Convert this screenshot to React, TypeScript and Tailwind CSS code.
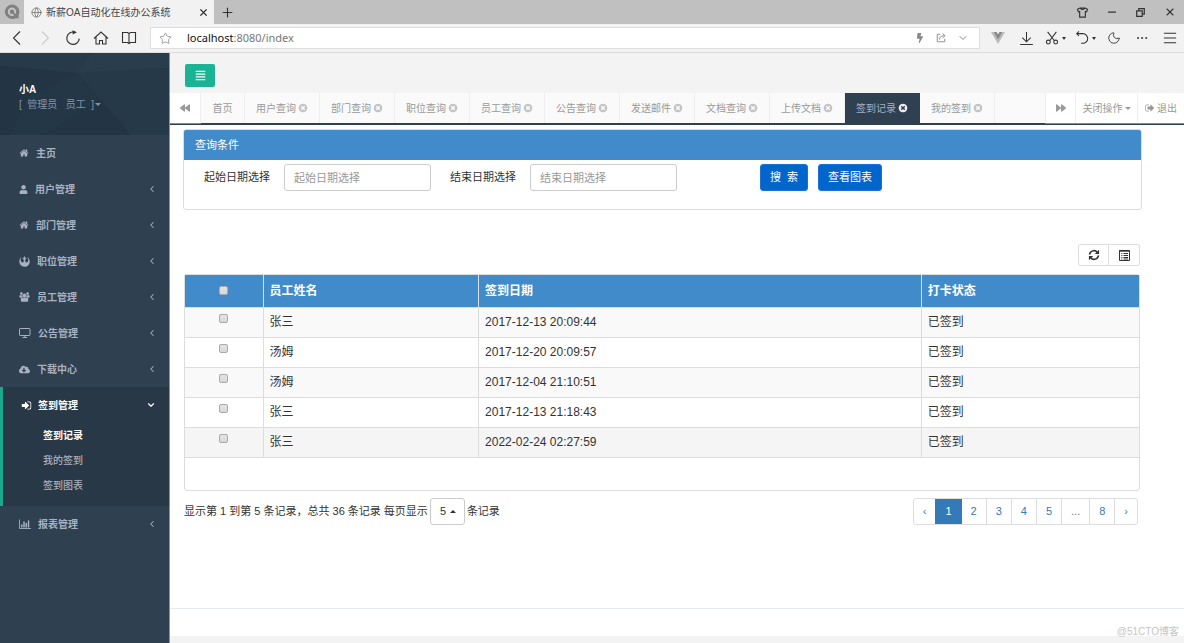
import React, { useState } from "react";
import { FaUser, FaRebel, FaCloudDownloadAlt, FaBackward, FaForward, FaAlignJustify, FaBolt } from "react-icons/fa";
import { ChevronLeft, ChevronDown, Star, Globe, Plus, X, Minus, Moon, Ellipsis } from "lucide-react";

type IconProps = { className?: string };

function Glyph({ d, className, wide = false }: IconProps & { d: string; wide?: boolean }) {
  return (
    <svg viewBox={wide ? "0 0 2048 1792" : "0 0 1792 1792"} className={className} fill="currentColor" aria-hidden="true">
      <path d={d} />
    </svg>
  );
}

const HOME = "M1472 992v480q0 26-19 45t-45 19h-384v-384h-256v384h-384q-26 0-45-19t-19-45v-480q0-1 .5-3t.5-3l575-474 575 474q1 2 1 6zm223-69l-62 74q-8 9-21 11h-3q-13 0-21-7l-692-577-692 577q-12 8-24 7-13-2-21-11l-62-74q-8-10-7-23.5t11-21.5l719-599q32-26 76-26t76 26l244 204v-195q0-14 9-23t23-9h192q14 0 23 9t9 23v408l219 182q10 8 11 21.5t-7 23.5z";
const CLOSE_CIRCLE = "M1277 1122q0-26-19-45l-181-181 181-181q19-19 19-45 0-27-19-46l-90-90q-19-19-46-19-26 0-45 19l-181 181-181-181q-19-19-45-19-27 0-46 19l-90 90q-19 19-19 46 0 26 19 45l181 181-181 181q-19 19-19 45 0 27 19 46l90 90q19 19 46 19 26 0 45-19l181-181 181 181q19 19 45 19 27 0 46-19l90-90q19-19 19-46zm387-226q0 209-103 385.5t-279.5 279.5-385.5 103-385.5-103-279.5-279.5-103-385.5 103-385.5 279.5-279.5 385.5-103 385.5 103 279.5 279.5 103 385.5z";
const SIGN_IN = "M1312 896q0 26-19 45l-544 544q-19 19-45 19t-45-19-19-45v-288h-448q-26 0-45-19t-19-45v-384q0-26 19-45t45-19h448v-288q0-26 19-45t45-19 45 19l544 544q19 19 19 45zm352-352v704q0 119-84.5 203.5t-203.5 84.5h-320q-13 0-22.5-9.5t-9.5-22.5q0-4-1-20t-.5-26.5 3-23.5 10-19.5 20.5-6.5h320q66 0 113-47t47-113v-704q0-66-47-113t-113-47h-312l-11.5-1-11.5-3-8-5.5-7-9-2-13.5q0-4-1-20t-.5-26.5 3-23.5 10-19.5 20.5-6.5h320q119 0 203.5 84.5t84.5 203.5z";
const SIGN_OUT = "M704 1440q0 4 1 20t.5 26.5-3 23.5-10 19.5-20.5 6.5h-320q-119 0-203.5-84.5t-84.5-203.5v-704q0-119 84.5-203.5t203.5-84.5h320q13 0 22.5 9.5t9.5 22.5q0 4 1 20t.5 26.5-3 23.5-10 19.5-20.5 6.5h-320q-66 0-113 47t-47 113v704q0 66 47 113t113 47h312l11.5 1 11.5 3 8 5.5 7 9 2 13.5zm928-544q0 26-19 45l-544 544q-19 19-45 19t-45-19-19-45v-288h-448q-26 0-45-19t-19-45v-384q0-26 19-45t45-19h448v-288q0-26 19-45t45-19 45 19l544 544q19 19 19 45z";
const GROUP = "M657 896q-162 5-265 128h-134q-82 0-138-40.5t-56-118.5q0-353 124-353 6 0 43.5 21t97.5 42.5 119 21.5q67 0 133-23-5 37-5 66 0 139 81 256zm1071 637q0 120-73 189.5t-194 69.5h-874q-121 0-194-69.5t-73-189.5q0-53 3.5-103.5t14-109 26.5-108.5 43-97.5 62-81 85.5-53.5 111.5-20q10 0 43 21.5t73 48 107 48 135 21.5 135-21.5 107-48 73-48 43-21.5q61 0 111.5 20t85.5 53.5 62 81 43 97.5 26.5 108.5 14 109 3.5 103.5zm-1024-1277q0 106-75 181t-181 75-181-75-75-181 75-181 181-75 181 75 75 181zm704 384q0 159-112.5 271.5t-271.5 112.5-271.5-112.5-112.5-271.5 112.5-271.5 271.5-112.5 271.5 112.5 112.5 271.5zm576 225q0 78-56 118.5t-138 40.5h-134q-103-123-265-128 81-117 81-256 0-29-5-66 66 23 133 23 59 0 119-21.5t97.5-42.5 43.5-21q124 0 124 353zm-128-609q0 106-75 181t-181 75-181-75-75-181 75-181 181-75 181 75 75 181z";

function Desktop() {
  return (
    <svg viewBox="0 0 12 12" className="size-3" fill="none" stroke="currentColor" aria-hidden="true">
      <rect x="0.5" y="1.5" width="10.5" height="7" rx="0.6" />
      <path d="M3.5 10.5h4.5M5.8 8.5v2" />
    </svg>
  );
}

function BarChart() {
  return (
    <svg viewBox="0 0 12 12" className="size-3" fill="none" stroke="currentColor" aria-hidden="true">
      <path d="M0.5 1.5v9h11.5" strokeWidth="0.9" />
      <path d="M2.8 9.6V6.5M5 9.6V3.5M7.2 9.6V5M9.5 9.6V2.5" strokeWidth="1.5" />
    </svg>
  );
}

function Caret({ up = false }: { up?: boolean }) {
  return (
    <svg viewBox="0 0 6 3" className="h-[3px] w-[6px]" fill="currentColor" aria-hidden="true">
      <path d={up ? "M0 3h6L3 0z" : "M0 0h6L3 3z"} />
    </svg>
  );
}

function Line({ d, children, className = "size-4" }: IconProps & { d: string; children?: React.ReactNode }) {
  return (
    <svg viewBox="0 0 16 16" className={className} fill="none" stroke="currentColor" strokeWidth="1.1" aria-hidden="true">
      <path d={d} />
      {children}
    </svg>
  );
}

function Browser() {
  const slot = "flex w-7 shrink-0 items-center justify-center";
  const wide = "flex w-[30px] shrink-0 items-center justify-center gap-[3px]";
  return (
    <header className="text-[#333]">
      <div className="flex h-6 bg-[#c0c0c0]">
        <div className="flex w-6 items-center justify-center">
          <svg viewBox="0 0 16 16" className="size-4" aria-label="浏览器">
            <path d="M8 0.6a7.2 7.2 0 1 0 3.4 13.6h3.2v-3.1A7.2 7.2 0 0 0 8 0.6z" fill="#808080" />
            <circle cx="8" cy="7.8" r="3.2" fill="#808080" stroke="#c4c4c4" strokeWidth="2" />
            <path d="M9.3 9.2l2.4 2.4" stroke="#808080" strokeWidth="1.8" />
          </svg>
        </div>
        <div className="flex w-[190px] items-center bg-[#f2f2f2] pr-[5px] pl-[7px]">
          <Globe className="size-[11px] text-[#777]" strokeWidth={1.8} />
          <span className="ml-1 flex-1 text-[10px] text-[#444]">新薪OA自动化在线办公系统</span>
          <button aria-label="关闭标签页"><X className="size-[11px]" strokeWidth={2.6} /></button>
        </div>
        <button aria-label="新建标签页" className="px-[6px]"><Plus className="size-[15px]" strokeWidth={1.8} /></button>
        <div className="ml-auto flex">
          <button aria-label="皮肤" className="flex w-[29px] items-center justify-center">
            <Line d="M5 2.5L1.8 4l1.1 3.2 1.6-.5v7h7v-7l1.6.5L14.2 4 11 2.5C10 4.8 6 4.8 5 2.5z M5.2 2.5h5.6" className="size-[13px] stroke-[1.4]" />
          </button>
          <button aria-label="最小化" className="flex w-[29px] items-center justify-center"><Minus className="size-3" strokeWidth={2.5} /></button>
          <button aria-label="还原" className="flex w-[29px] items-center justify-center">
            <Line d="M2.5 5.5h8v8h-8zM5.5 5.5v-3h8v8h-3" className="size-[11px] stroke-[1.8]" />
          </button>
          <button aria-label="关闭" className="flex w-[29px] items-center justify-center"><X className="size-3" strokeWidth={2.2} /></button>
        </div>
      </div>
      <div className="flex h-[29px] items-stretch border-b border-[#dcdcdc] bg-[#f2f2f2] pl-[3px]">
        <button aria-label="后退" className={slot}><Line d="M11 1.5L4.5 8l6.5 6.5" /></button>
        <button aria-label="前进" className={slot + " text-[#ccc]"}><Line d="M5 1.5L11.5 8 5 14.5" /></button>
        <button aria-label="刷新" className={slot}>
          <Line d="M9.5 2.2A6.2 6.2 0 1 0 14.2 8.6" className="size-4 stroke-[1.2]"><path d="M7.5 0.3l4.5 2-4.3 2.2z" fill="currentColor" stroke="none" /></Line>
        </button>
        <button aria-label="主页" className={slot}><Line d="M1 8.5L8 2l7 6.5M3 7v7h3.5v-3.5h3V14H13V7" /></button>
        <button aria-label="阅读" className={slot}><Line d="M8 3.5v10M1.5 2.5H6.5L8 3.5l1.5-1h5v10h-5L8 13.5l-1.5-1h-5z" /></button>
        <div className="my-[3px] mr-1 ml-[7px] flex flex-1 items-center border border-[#dedede] bg-white pr-[10px] pl-2">
          <Star className="size-[13px] text-[#888]" strokeWidth={1.5} />
          <span className="ml-[15px] flex-1 pt-px font-['Noto_Sans'] text-[11px] text-[#777]"><span className="text-[#111]">localhost</span>:8080/index</span>
          <span className="flex items-center gap-[10px] text-[#888]">
            <FaBolt className="size-[10px]" />
            <Line d="M7 3H3v10h10V9M6 10c0-3.5 2-5 6.5-5M10 2l3.5 3L10 8" className="size-3 stroke-[1.2]" />
            <ChevronDown className="size-3" strokeWidth={2} />
          </span>
        </div>
        <span className={slot}>
          <svg viewBox="0 0 14 12" className="h-3 w-[14px]" aria-hidden="true"><path d="M0 0h14L7 12z" fill="#bbb" /><path d="M2.8 0h8.4L7 7.5z" fill="#888" /><path d="M5.500 0h3L7 2.600z" fill="#f2f2f2" /></svg>
        </span>
        <button aria-label="下载" className={slot}><Line d="M8 1v10.5M3.5 7L8 11.5 12.5 7M1.2 14.500h13.600" className="size-[15px]" /></button>
        <button aria-label="截图" className={wide}>
          <Line d="M3 1l7.700 10.200M13 1L5.300 11.200" className="size-[14px] stroke-[1.200]"><circle cx="3.800" cy="12.600" r="2.200" /><circle cx="12.200" cy="12.600" r="2.200" /></Line>
          <svg viewBox="0 0 4 3" className="h-[3px] w-1" fill="currentColor"><path d="M0 0h4L2 3z" /></svg>
        </button>
        <button aria-label="恢复" className={wide}>
          <Line d="M2 3h7a5.500 5.500 0 0 1 0 11H7M4.500 0.500L2 3l2.500 2.500" className="size-[14px] stroke-[1.200]" />
          <svg viewBox="0 0 4 3" className="h-[3px] w-1" fill="currentColor"><path d="M0 0h4L2 3z" /></svg>
        </button>
        <button aria-label="夜间模式" className={slot}><Moon className="size-[14px]" strokeWidth={1.5} /></button>
        <button aria-label="更多" className={slot}><Ellipsis className="size-[14px]" strokeWidth={1.5} /></button>
        <button aria-label="菜单" className={slot}><Line d="M1 2.500h14M1 8h14M1 13.500h14" className="size-[14px] stroke-[1.200]" /></button>
      </div>
    </header>
  );
}

const menu = [
  { label: "主页", icon: <Glyph d={HOME} className="size-[10px]" />, leaf: true },
  { label: "用户管理", icon: <FaUser className="size-[9px]" /> },
  { label: "部门管理", icon: <Glyph d={HOME} className="size-[10px]" /> },
  { label: "职位管理", icon: <FaRebel className="size-[11px]" /> },
  { label: "员工管理", icon: <Glyph d={GROUP} wide className="h-[10px] w-[11px]" /> },
  { label: "公告管理", icon: <Desktop /> },
  { label: "下载中心", icon: <FaCloudDownloadAlt className="size-[11px]" /> },
];

function MenuRow({ label, icon, leaf = false }: { label: string; icon: React.ReactNode; leaf?: boolean }) {
  return (
    <a href="#" className="flex h-9 items-center gap-[7px] pr-3 pl-[19px]">
      {icon}
      <span className="flex-1">{label}</span>
      {!leaf && <ChevronLeft className="size-[10px]" strokeWidth={2.5} />}
    </a>
  );
}

function Sidebar() {
  return (
    <aside className="w-[170px] shrink-0 border-r border-[#8a949c] bg-[#2f4050] text-[10px] font-bold text-[#a7b1c2]">
      <div className="relative h-[82px] overflow-hidden bg-[#263949] pt-[30px] pl-[19px]">
        <svg viewBox="0 0 170 83" preserveAspectRatio="none" className="absolute inset-0 size-full" aria-hidden="true">
          <path d="M0 13L77 20 132 83H0z" fill="#233545" />
          <path d="M93 0H170V15L77 20z" fill="#2a3d4c" />
          <path d="M0 0h93L77 20 0 13z" fill="#273a49" />
          <path d="M28 45L77 20 100 48 40 83H10z" fill="#243747" />
        </svg>
        <div className="relative">
          <div className="leading-[14px] text-white">小A</div>
          <button className="flex items-center gap-px leading-[15px] font-normal text-[#8095a8]">
            <span className="whitespace-pre">[  管理员   员工  ]</span>
            <Caret />
          </button>
        </div>
      </div>
      <nav>
        {menu.map((m) => <MenuRow key={m.label} {...m} />)}
        <div className="border-l-[3px] border-[#19aa8d] bg-[#293846] pb-2">
          <a href="#" className="flex h-9 items-center gap-[6px] pr-[13px] pl-[18px] text-white">
            <Glyph d={SIGN_IN} className="size-[11px]" />
            <span className="flex-1">签到管理</span>
            <ChevronDown className="size-[10px]" strokeWidth={2.8} />
          </a>
          {["签到记录", "我的签到", "签到图表"].map((s, i) => (
            <a key={s} href="#" className={i === 0 ? "flex h-[25px] items-center pl-10 text-white" : "flex h-[25px] items-center pl-10 font-medium"}>{s}</a>
          ))}
        </div>
        <MenuRow label="报表管理" icon={<BarChart />} />
      </nav>
    </aside>
  );
}

const tabs = ["首页", "用户查询", "部门查询", "职位查询", "员工查询", "公告查询", "发送邮件", "文档查询", "上传文档", "签到记录", "我的签到"];

function Tabs() {
  const [active, setActive] = useState("签到记录");
  return (
    <div className="flex h-8 border-b border-[#2f4050] bg-white text-[10px] text-[#999]">
      <button aria-label="向左" className="flex w-[30px] shrink-0 items-center justify-center border-b border-[#7f8b96]"><FaBackward className="size-[10px]" /></button>
      <div className="flex min-w-0 flex-1 overflow-hidden border-b border-l border-b-[#2f4050] border-l-[#eee] bg-[#fafafa]">
        {tabs.map((t, i) => (
          <button
            key={t}
            onClick={() => setActive(t)}
            className={
              t === active
                ? "flex min-w-11 shrink-0 items-center justify-center gap-[2px] border-r border-[#2f4050] bg-[#2f4050] px-[11px] text-[#a7b1c2]"
                : "flex min-w-11 shrink-0 items-center justify-center gap-[2px] border-r border-[#eee] px-[11px]"
            }
          >
            {t}
            {i > 0 && <Glyph d={CLOSE_CIRCLE} className={t === active ? "size-[10px] text-[#eee]" : "size-[10px] text-[#c4c4c4]"} />}
          </button>
        ))}
      </div>
      <div className="flex shrink-0 border-b border-[#7f8b96]">
        <button aria-label="向右" className="flex w-[31px] items-center justify-center border-r border-l border-[#eee]"><FaForward className="size-[10px]" /></button>
        <button className="flex w-[62px] items-center justify-center gap-[2px] border-r border-[#eee]">关闭操作<Caret /></button>
        <button className="flex w-[46px] items-center justify-center gap-[2px]"><Glyph d={SIGN_OUT} className="size-[10px]" />退出</button>
      </div>
    </div>
  );
}

function DateField({ id, label }: { id: string; label: string }) {
  return (
    <div className="flex items-center gap-[14px]">
      <label htmlFor={id} className="text-[#333]">{label}</label>
      <input id={id} placeholder={label} className="h-[27px] w-[147px] rounded-[3px] border border-[#ccc] px-[9px] placeholder:text-[#999]" />
    </div>
  );
}

const rows = [
  ["张三", "2017-12-13 20:09:44"],
  ["汤姆", "2017-12-20 20:09:57"],
  ["汤姆", "2017-12-04 21:10:51"],
  ["张三", "2017-12-13 21:18:43"],
  ["张三", "2022-02-24 02:27:59"],
];

const box = "block mx-auto size-[9px] appearance-none rounded-[2px] border border-[#aaa] bg-linear-to-b from-[#e4e4e4] to-[#d8d8d8] checked:bg-[#428bca]";

function Records() {
  return (
    <div className="rounded-[3px] border border-[#ddd] pb-8">
      <table className="h-[183px] w-full table-fixed border-collapse text-left text-[12px] text-[#333]">
        <thead>
          <tr className="h-8 bg-[#428bca] text-white">
            <th className="w-[78px]"><input type="checkbox" aria-label="全选" className={box} /></th>
            <th className="w-[22.6%] border-l border-[#ddd] px-[6px]">员工姓名</th>
            <th className="w-[46.4%] border-l border-[#ddd] px-[6px]">签到日期</th>
            <th className="border-l border-[#ddd] px-[6px]">打卡状态</th>
          </tr>
        </thead>
        <tbody>
          {rows.map(([name, date], i) => (
            <tr key={date} className={i === 4 ? "border-y border-[#ddd] bg-[#f5f5f5]" : i % 2 ? "border-y border-[#ddd] bg-white" : "border-y border-[#ddd] bg-[#f9f9f9]"}>
              <td className="pt-[6px] align-top"><input type="checkbox" aria-label={"选择 " + name + " " + date} className={box} /></td>
              <td className="border-l border-[#ddd] px-[6px]">{name}</td>
              <td className="border-l border-[#ddd] px-[6px]">{date}</td>
              <td className="border-l border-[#ddd] px-[6px]">已签到</td>
            </tr>
          ))}
        </tbody>
      </table>
    </div>
  );
}

function Pagination() {
  const pages = ["2", "3", "4", "5", "...", "8", "›"];
  return (
    <nav aria-label="分页" className="flex h-[27px] overflow-hidden rounded-[3px] border border-[#ddd] text-[#337ab7]">
      <a href="#" aria-label="上一页" className="flex items-center px-[9px]">‹</a>
      <a href="#" aria-current="page" className="-my-px flex items-center bg-[#337ab7] px-[10px] text-white">1</a>
      {pages.map((p, i) => (
        <a
          key={p}
          href="#"
          className={p === "..." ? "flex items-center border-l border-[#ddd] px-[9px] text-[#777]" : i === 0 ? "flex items-center px-[9px]" : "flex items-center border-l border-[#ddd] px-[9px]"}
        >
          {p}
        </a>
      ))}
    </nav>
  );
}

export default function App() {
  return (
    <div className="relative flex min-h-screen flex-col bg-white font-['Liberation_Sans','Noto_Sans_CJK_SC',sans-serif] text-[11px]">
      <Browser />
      <div className="flex flex-1">
        <Sidebar />
        <div className="flex min-w-0 flex-1 flex-col">
          <div className="bg-[#f3f3f4] pt-[11px] pb-[6px] pl-[15px]">
            <button aria-label="折叠菜单" className="flex h-[23px] w-[30px] items-center justify-center rounded-[2px] bg-[#1ab394] text-white"><FaAlignJustify className="size-[11px]" /></button>
          </div>
          <Tabs />
          <main className="flex-1 pt-1 pr-[42px] pl-[13px]">
            <section className="rounded-[3px] border border-[#ddd]">
              <h2 className="flex h-[30px] items-center rounded-t-[2px] bg-[#428bca] pl-[11px] text-white">查询条件</h2>
              <form className="flex gap-[19px] pt-1 pb-[18px] pl-5" onSubmit={(e) => e.preventDefault()}>
                <DateField id="start" label="起始日期选择" />
                <DateField id="end" label="结束日期选择" />
                <div className="ml-16 flex gap-[10px] text-white">
                  <button className="w-12 rounded-[3px] border border-[#1a73d4] bg-[#0066cc] whitespace-pre">搜  索</button>
                  <button className="w-16 rounded-[3px] border border-[#1a73d4] bg-[#0066cc]">查看图表</button>
                </div>
              </form>
            </section>
            <div className="pt-[34px] pr-[2px] pl-px">
              <div className="mb-2 flex justify-end text-[#333]">
                <button aria-label="刷新" className="flex h-[22px] w-[31px] items-center justify-center rounded-l-[3px] border border-[#ddd]">
                  <Line d="M2 7.5A6 6 0 0 1 12.5 4.3M14 8.5A6 6 0 0 1 3.5 11.7" className="size-3 stroke-[2]">
                    <path d="M14.8 1v5.8H9zM1.2 15V9.2H7z" fill="currentColor" stroke="none" />
                  </Line>
                </button>
                <button aria-label="列" className="flex h-[22px] w-[31px] items-center justify-center rounded-r-[3px] border border-l-0 border-[#ddd]">
                  <svg viewBox="0 0 11 11" className="size-[11px]" fill="none" stroke="currentColor" aria-hidden="true">
                    <path d="M0.5 0.5h10v10h-10zM0 1.2h11" />
                    <path d="M2 3.5h1.500M2 5.500h1.500M2 7.500h1.500M2 9h1.500" strokeWidth="0.700" />
                    <path d="M4.500 3.500h4.500M4.500 5.500h4.500M4.500 7.500h4.500M4.500 9h4.500" strokeWidth="1" />
                  </svg>
                </button>
              </div>
              <Records />
              <div className="mt-[7px] flex items-center justify-between pr-[2px] text-[#333]">
                <div className="flex items-center gap-[2px]">
                  <label htmlFor="size">显示第 1 到第 5 条记录，总共 36 条记录 每页显示</label>
                  <div className="relative">
                    <select id="size" className="block h-[27px] w-[35px] appearance-none rounded-[3px] border border-[#ccc] bg-white pl-[9px]">
                      <option>5</option>
                      <option>10</option>
                    </select>
                    <span className="pointer-events-none absolute top-3 right-[9px]"><Caret up /></span>
                  </div>
                  <span>条记录</span>
                </div>
                <Pagination />
              </div>
            </div>
          </main>
          <footer className="h-[35px] border-t border-b-[7px] border-t-[#e7eaec] border-b-[#f3f3f4]" />
        </div>
      </div>
      <div className="absolute right-[5px] bottom-1 text-[10px] leading-[14px] text-[#c4c4c4]">@51CTO博客</div>
    </div>
  );
}
